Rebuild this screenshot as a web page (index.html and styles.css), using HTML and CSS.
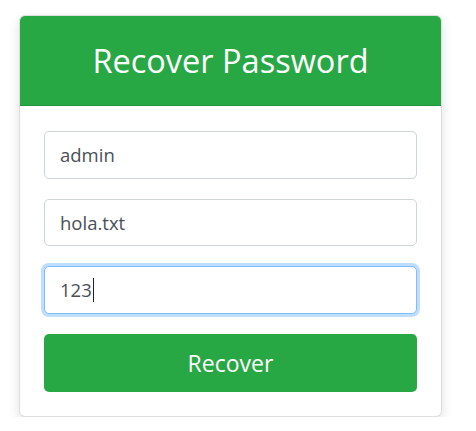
FILE: index.html
```html
<!DOCTYPE html>
<html>
<head>
<meta charset="utf-8">
<link rel="stylesheet" href="styles.css">
</head>
<body>
<div class="card">
  <div class="card-header">Recover Password</div>
  <div class="card-body">
    <input class="field" type="text" value="admin">
    <input class="field" type="text" value="hola.txt">
    <div class="field focused"><span>123</span><span class="caret"></span></div>
    <button class="btn">Recover</button>
  </div>
</div>
</body>
</html>
```
FILE: styles.css
```css
* { box-sizing: border-box; }
html, body { margin: 0; padding: 0; background: #fff; }
body { font-family: "Open Sans", "Noto Sans", sans-serif; }
.card {
  margin: 15px 0 0 19px;
  width: 423px;
  border: 1px solid rgba(0,0,0,0.125);
  border-radius: 6px;
  overflow: hidden;
  box-shadow: 0 4px 12px rgba(0,0,0,0.12);
  background: #fff;
}
.card-header {
  background: #28a745;
  color: #fff;
  height: 90px;
  display: flex;
  align-items: center;
  justify-content: center;
  font-size: 32.5px;
  border-bottom: 1px solid rgba(0,0,0,0.125);
}
.card-body {
  padding: 25px 24px 24.5px 24px;
  display: flex;
  flex-direction: column;
  gap: 20px;
}
.field {
  display: flex;
  align-items: center;
  height: 47.5px;
  width: 100%;
  padding: 0 15px;
  border: 1px solid #ced4da;
  border-radius: 5px;
  font-family: inherit;
  font-size: 18.5px;
  color: #495057;
  background: #fff;
  outline: none;
}
.field.focused {
  border-color: #80bdff;
  box-shadow: 0 0 0 3px rgba(0,123,255,0.25);
}
.caret {
  display: inline-block;
  width: 1px;
  height: 24px;
  background: #222;
  margin-left: 1px;
}
.btn {
  height: 58px;
  width: 100%;
  border: none;
  border-radius: 5px;
  background: #28a745;
  color: #fff;
  font-family: inherit;
  font-size: 23px;
  padding: 0;
  margin-top: 0;
}
```
